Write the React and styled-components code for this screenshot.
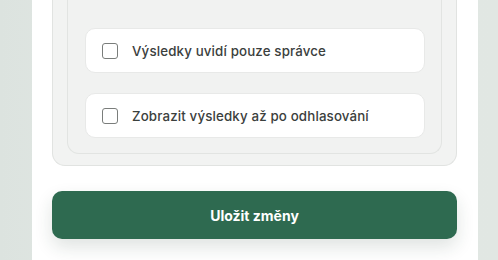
import React from 'react';
import styled, { createGlobalStyle } from 'styled-components';

const GlobalStyle = createGlobalStyle`
  *, *::before, *::after { box-sizing: border-box; }
  html, body { margin: 0; padding: 0; }
  body {
    font-family: Inter, 'Noto Sans', sans-serif;
    background: #dfe5e1;
    overflow: hidden;
  }
`;

const Page = styled.div`
  height: 260px;
  overflow: hidden;
  padding-left: 32px;
  background: linear-gradient(90deg, #dce3df 0%, #e3e8e5 30%, #e1e7e3 100%);
`;

const Card = styled.div`
  width: 446px;
  background: #fff;
  margin-top: -60px;
  padding: 0 21px 40px 20px;
  min-height: 400px;
`;

const OuterPanel = styled.div`
  background: #f2f3f2;
  border: 1px solid #e1e3e1;
  border-top: none;
  border-radius: 0 0 13px 13px;
  padding: 0 14px 11px;
`;

const InnerPanel = styled.div`
  background: #f1f2f1;
  border: 1px solid #e2e4e2;
  border-top: none;
  border-radius: 0 0 12px 12px;
  padding: 88px 16px 15px 17px;
  display: flex;
  flex-direction: column;
  gap: 20px;
`;

const Option = styled.label`
  display: flex;
  align-items: center;
  gap: 14px;
  height: 45px;
  padding-left: 16px;
  background: #fff;
  border: 1px solid #e8e9e8;
  border-radius: 10px;
  font-size: 13.3px;
  font-weight: 500;
  color: #3b403d;
  letter-spacing: 0.15px;
`;

const Box = styled.span`
  width: 16px;
  height: 16px;
  border: 1.5px solid #7a7d7b;
  border-radius: 3px;
  background: #fff;
  flex: none;
`;

const SaveButton = styled.button`
  display: block;
  width: 405px;
  height: 48px;
  margin-top: 25px;
  border: none;
  border-radius: 10px;
  background: #2e6a50;
  color: #fff;
  font-family: Inter, 'Noto Sans', sans-serif;
  font-size: 14px;
  font-weight: 700;
  box-shadow: 0 8px 18px rgba(30, 60, 45, 0.14);
`;

export default function App() {
  return (
    <>
      <GlobalStyle />
      <Page>
        <Card>
          <OuterPanel>
            <InnerPanel>
              <Option><Box />Výsledky uvidí pouze správce</Option>
              <Option><Box />Zobrazit výsledky až po odhlasování</Option>
            </InnerPanel>
          </OuterPanel>
          <SaveButton>Uložit změny</SaveButton>
        </Card>
      </Page>
    </>
  );
}
